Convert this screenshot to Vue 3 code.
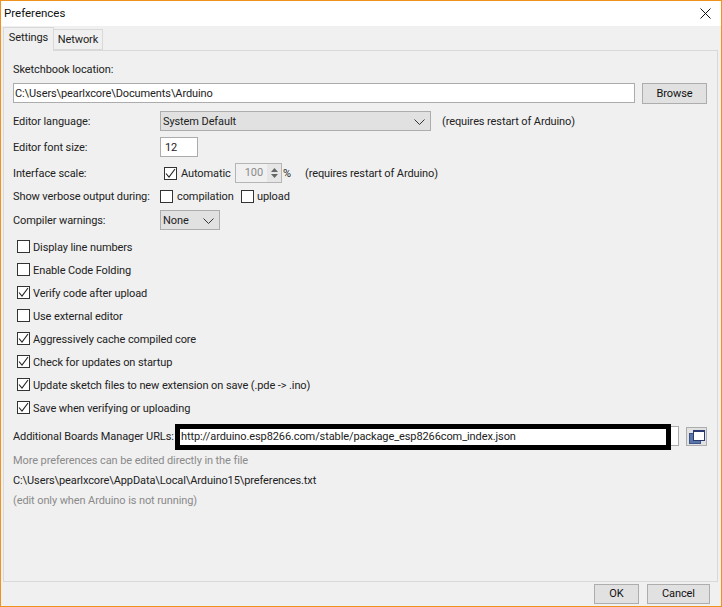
<script setup>
const checks = [
  { label: 'Display line numbers', on: false },
  { label: 'Enable Code Folding', on: false },
  { label: 'Verify code after upload', on: true },
  { label: 'Use external editor', on: false },
  { label: 'Aggressively cache compiled core', on: true },
  { label: 'Check for updates on startup', on: true },
  { label: 'Update sketch files to new extension on save (.pde -> .ino)', on: true },
  { label: 'Save when verifying or uploading', on: true },
]
</script>

<template>
  <div class="win">
    <header class="title">
      <span>Preferences</span>
      <svg class="close" width="11" height="11" viewBox="0 0 11 11"><path d="M.5.5l10 10M10.5.5l-10 10" stroke="#111" fill="none" /></svg>
    </header>
    <nav class="tabs">
      <div class="tab active">Settings</div>
      <div class="tab">Network</div>
    </nav>
    <main class="panel">
      <div class="row r-label">Sketchbook location:</div>
      <div class="row r-path">
        <div class="input path">C:\Users\pearlxcore\Documents\Arduino</div>
        <button class="btn browse">Browse</button>
      </div>
      <div class="row r-lang">
        <label class="lbl">Editor language:</label>
        <div class="select lang">System Default
          <svg class="chev" width="11" height="6" viewBox="0 0 11 6"><path d="M.5.5l5 5 5-5" stroke="#333" fill="none" /></svg>
        </div>
        <span class="txt n-lang">(requires restart of Arduino)</span>
      </div>
      <div class="row r-size">
        <label class="lbl">Editor font size:</label>
        <div class="input size">12</div>
      </div>
      <div class="row r-scale">
        <label class="lbl">Interface scale:</label>
        <span class="box on auto"><svg width="11" height="11" viewBox="0 0 11 11"><path d="M1 5.5l3 3.5 6-8" stroke="#222" stroke-width="1.1" fill="none" /></svg></span>
        <span class="txt t-auto">Automatic</span>
        <div class="spin">
          <span class="spin-val">100</span>
          <span class="spin-arrows">
            <svg width="7" height="4" viewBox="0 0 7 4"><path d="M3.5 0L7 4H0z" fill="#666" /></svg>
            <svg width="7" height="4" viewBox="0 0 7 4"><path d="M0 0h7L3.5 4z" fill="#666" /></svg>
          </span>
        </div>
        <span class="txt pct">%</span>
        <span class="txt n-scale">(requires restart of Arduino)</span>
      </div>
      <div class="row r-verbose">
        <label class="lbl">Show verbose output during:</label>
        <span class="box"></span>
        <span class="txt t-comp">compilation</span>
        <span class="box"></span>
        <span class="txt t-up">upload</span>
      </div>
      <div class="row r-warn">
        <label class="lbl">Compiler warnings:</label>
        <div class="select warn">None
          <svg class="chev" width="11" height="6" viewBox="0 0 11 6"><path d="M.5.5l5 5 5-5" stroke="#333" fill="none" /></svg>
        </div>
      </div>
      <ul class="checks">
        <li v-for="c in checks" :key="c.label" class="check">
          <span class="box" :class="{ on: c.on }">
            <svg v-if="c.on" width="11" height="11" viewBox="0 0 11 11"><path d="M1 5.5l3 3.5 6-8" stroke="#222" stroke-width="1.1" fill="none" /></svg>
          </span>
          <span class="txt">{{ c.label }}</span>
        </li>
      </ul>
      <div class="row r-url">
        <label class="lbl lbl-url">Additional Boards Manager URLs:</label>
        <div class="input url">
          <span class="url-text">http://arduino.esp8266.com/stable/package_esp8266com_index.json</span>
          <span class="mark"></span>
        </div>
        <button class="btn icon-btn">
          <svg width="16" height="14" viewBox="0 0 16 14">
            <rect x=".5" y="3.5" width="11" height="10" fill="#5a76a8" stroke="#3d5488" />
            <rect x="4.5" y=".5" width="11" height="10" fill="#fff" stroke="#2a3a70" />
            <path d="M4 1.5h12" stroke="#2a3a70" />
          </svg>
        </button>
      </div>
      <div class="info grey first">More preferences can be edited directly in the file</div>
      <div class="info">C:\Users\pearlxcore\AppData\Local\Arduino15\preferences.txt</div>
      <div class="info grey">(edit only when Arduino is not running)</div>
    </main>
    <footer class="foot">
      <button class="btn ok">OK</button>
      <button class="btn cancel">Cancel</button>
    </footer>
  </div>
</template>

<style scoped>
.win {
  box-sizing: border-box;
  width: 722px;
  height: 607px;
  display: flex;
  flex-direction: column;
  background: #f0f0f0;
  border: 1px solid #f0931e;
  font: 11px/20px Roboto, "Noto Sans", sans-serif;
  letter-spacing: -0.1px;
  color: #222;
  overflow: hidden;
  white-space: nowrap;
}
.title {
  box-sizing: border-box;
  height: 25px;
  flex: none;
  background: #fff;
  display: flex;
  align-items: center;
  justify-content: space-between;
  padding: 0 10px 2px 3px;
  font-size: 11.5px;
  color: #111;
  letter-spacing: 0;
}
.close { margin-top: 2px; }
.tabs {
  height: 25px;
  flex: none;
  display: flex;
  align-items: flex-end;
  padding-left: 2px;
  margin-bottom: -1px;
  position: relative;
  z-index: 1;
}
.tab {
  box-sizing: border-box;
  width: 49px;
  height: 21px;
  margin-bottom: 1px;
  border: 1px solid #d9d9d9;
  border-left: 0;
  background: #f0f0f0;
  text-align: center;
  line-height: 20px;
  margin-top: 4px;
}
.tab.active {
  width: 51px;
  height: 24px;
  margin-bottom: 0;
  border-left: 1px solid #d9d9d9;
  border-bottom: 0;
  line-height: 19px;
}
.panel {
  box-sizing: border-box;
  flex: none;
  height: 532px;
  margin: 0 3px 0 2px;
  border: 1px solid #d9d9d9;
  padding: 8px 0 0 9px;
}
.row {
  display: flex;
  align-items: center;
  height: 20px;
}
.r-label { box-sizing: border-box; padding-top: 2px; }
.lbl { width: 147px; flex: none; padding-top: 2px; }
.txt { padding-top: 2px; }
.r-path { margin-top: 4px; height: 21px; align-items: flex-start; }
.r-lang { margin-top: 7px; }
.r-size { margin-top: 6px; }
.r-scale { margin-top: 6px; }
.r-verbose { margin-top: 3px; }
.r-warn { margin-top: 4px; }
.input {
  box-sizing: border-box;
  height: 20px;
  background: #fff;
  border: 1px solid #acacac;
  line-height: 20px;
  padding-left: 1px;
  flex: none;
}
.path { width: 622px; }
.size { width: 38px; height: 20px; padding-left: 4px; }
.btn {
  box-sizing: border-box;
  background: #e1e1e1;
  border: 1px solid #adadad;
  font: inherit;
  letter-spacing: inherit;
  color: #111;
  padding: 0;
  line-height: 18px;
  flex: none;
}
.browse { width: 65px; height: 21px; margin-left: 7px; }
.select {
  box-sizing: border-box;
  position: relative;
  height: 20px;
  background: #e1e1e1;
  border: 1px solid #adadad;
  line-height: 20px;
  padding-left: 2px;
  flex: none;
}
.chev { position: absolute; right: 5px; top: 7px; }
.lang { width: 271px; }
.warn { width: 60px; }
.n-lang { margin-left: 11px; }
.box {
  box-sizing: border-box;
  width: 13px;
  height: 13px;
  border: 1px solid #333;
  background: #fff;
  flex: none;
  display: flex;
  align-items: center;
  justify-content: center;
}
.auto { margin-left: 4px; }
.t-auto { width: 54px; margin-left: 4px; flex: none; }
.spin {
  box-sizing: border-box;
  width: 47px;
  height: 20px;
  flex: none;
  border: 1px solid #b5b5b5;
  background: #f0f0f0;
  display: flex;
  align-items: center;
  justify-content: flex-end;
  color: #8a8a8a;
}
.spin-val { margin-right: 4px; line-height: 20px; }
.spin-arrows {
  width: 14px;
  height: 18px;
  background: #e6e6e6;
  display: flex;
  flex-direction: column;
  align-items: center;
  justify-content: center;
  gap: 2px;
}
.spin-arrows svg { display: block; }
.pct { margin-left: 1px; }
.n-scale { margin-left: 14px; }
.t-comp { width: 64px; margin-left: 4px; flex: none; }
.t-up { margin-left: 3px; }
.checks {
  list-style: none;
  margin: 5px 0 0 4px;
  padding: 0;
}
.check {
  height: 23px;
  display: flex;
  align-items: center;
  gap: 3px;
}
.r-url { margin-top: 7px; }
.lbl-url { width: 163px; }
.url {
  position: relative;
  width: 503px;
  padding-left: 4px;
  color: #222;
}
.mark {
  position: absolute;
  left: -2px;
  top: -3px;
  width: 496px;
  height: 26px;
  box-sizing: border-box;
  border: 5px solid #000;
  pointer-events: none;
}
.url-text { position: relative; }
.icon-btn {
  width: 21px;
  height: 19px;
  margin-left: 7px;
  margin-top: 1px;
  display: flex;
  align-items: center;
  justify-content: center;
}
.info { height: 20px; line-height: 22px; }
.first { margin-top: 4px; }
.grey { color: #8a8a8a; }
.foot {
  flex: 1;
  display: flex;
  align-items: flex-start;
  padding: 2px 0 0 593px;
  gap: 8px;
}
.ok { width: 45px; height: 20px; }
.cancel { width: 63px; height: 20px; }
</style>
